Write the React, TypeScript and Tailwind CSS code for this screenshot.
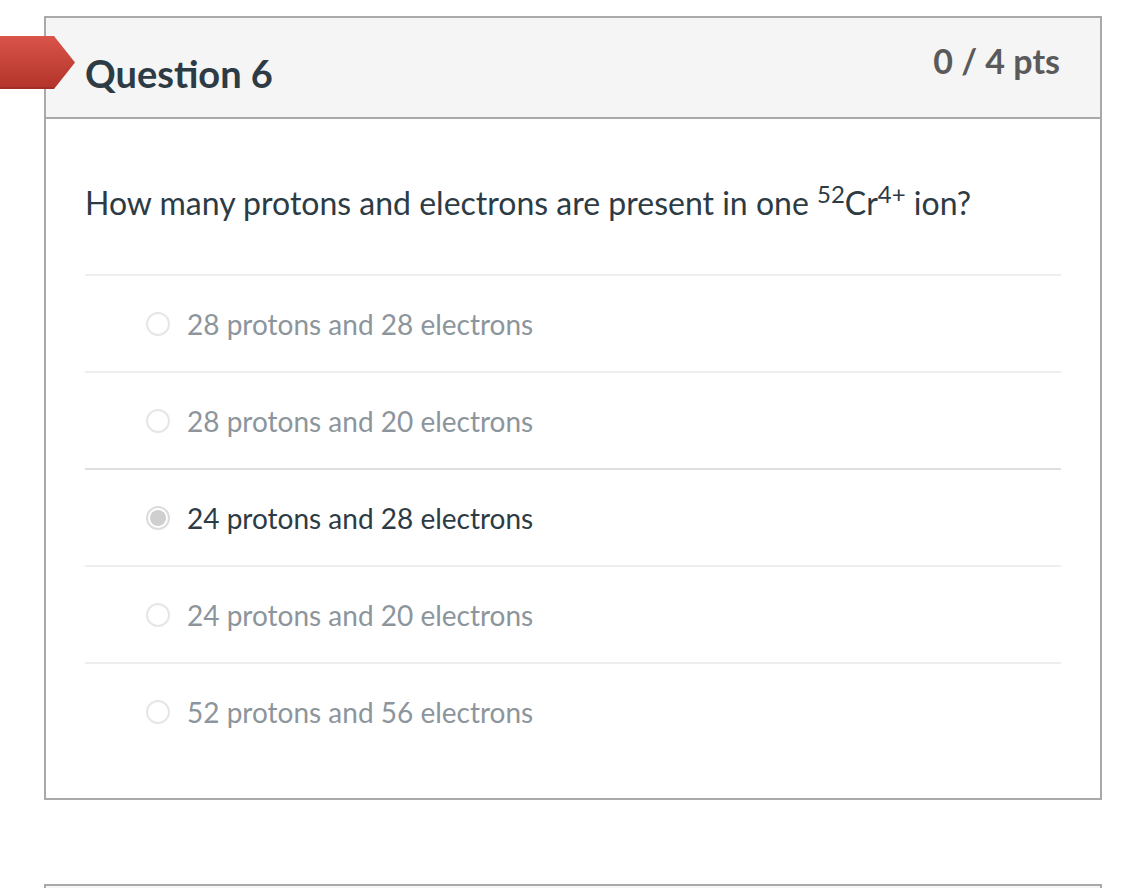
import React from 'react'

const answers = [
  { text: '28 protons and 28 electrons', selected: false },
  { text: '28 protons and 20 electrons', selected: false },
  { text: '24 protons and 28 electrons', selected: true },
  { text: '24 protons and 20 electrons', selected: false },
  { text: '52 protons and 56 electrons', selected: false },
]

function Radio({ checked }: { checked: boolean }) {
  if (checked) {
    return (
      <span className="flex h-[24px] w-[24px] shrink-0 items-center justify-center rounded-full border-[2px] border-[#dcdcdc] bg-white">
        <span className="h-[16px] w-[16px] rounded-full bg-[#cfcfcf]" />
      </span>
    )
  }
  return <span className="h-[24px] w-[24px] shrink-0 rounded-full border-[2px] border-[#e6e6e6] bg-white" />
}

function Flag() {
  return (
    <svg className="absolute left-0 top-[36px]" width="76" height="53" viewBox="0 0 76 53">
      <defs>
        <linearGradient id="flag" x1="0" y1="0" x2="0" y2="1">
          <stop offset="0" stopColor="#d9544a" />
          <stop offset="1" stopColor="#b23329" />
        </linearGradient>
      </defs>
      <path d="M0 0 H54 L75 26.5 L54 53 H0 Z" fill="url(#flag)" />
      <path d="M0 52 H54" stroke="#9e2c24" strokeWidth="1.5" />
    </svg>
  )
}

export default function App() {
  return (
    <div className="relative min-h-[888px] bg-white pt-[16px] font-['Lato','Noto_Sans',sans-serif]">
      <Flag />
      <div className="ml-[44px] w-[1058px] border-[2px] border-[#a9a9a9]">
        <div className="flex h-[101px] items-start justify-between border-b-[2px] border-[#a9a9a9] bg-[#f5f5f5] pl-[39px] pr-[40px]">
          <h2 className="mt-[31px] text-[38px] font-bold leading-[48px] text-[#2d3b45]">Question 6</h2>
          <span className="mt-[22px] text-[34px] font-bold leading-[42px] text-[#5a5a5a]">0 / 4 pts</span>
        </div>
        <div className="px-[39px] pb-[39px]">
          <p className="mt-[64px] h-[91px] text-[32px] leading-[40px] text-[#2d3b45]">
            How many protons and electrons are present in one <sup className="text-[24px]">52</sup>Cr
            <sup className="text-[24px]">4+</sup> ion?
          </p>
          {answers.map((a, i) => (
            <div
              key={a.text}
              className={`flex h-[97px] items-center gap-[17px] border-t-[2px] pl-[61px] ${
                i === 2 ? 'border-[#dedede]' : 'border-[#eeeeee]'
              }`}
            >
              <Radio checked={a.selected} />
              <span className={`text-[28px] leading-[36px] ${a.selected ? 'text-[#2d3b45]' : 'text-[#8d959c]'}`}>
                {a.text}
              </span>
            </div>
          ))}
        </div>
      </div>
      <div className="ml-[44px] mt-[84px] h-[20px] w-[1058px] border-x-[2px] border-t-[2px] border-[#a9a9a9] bg-[#f5f5f5]" />
    </div>
  )
}
